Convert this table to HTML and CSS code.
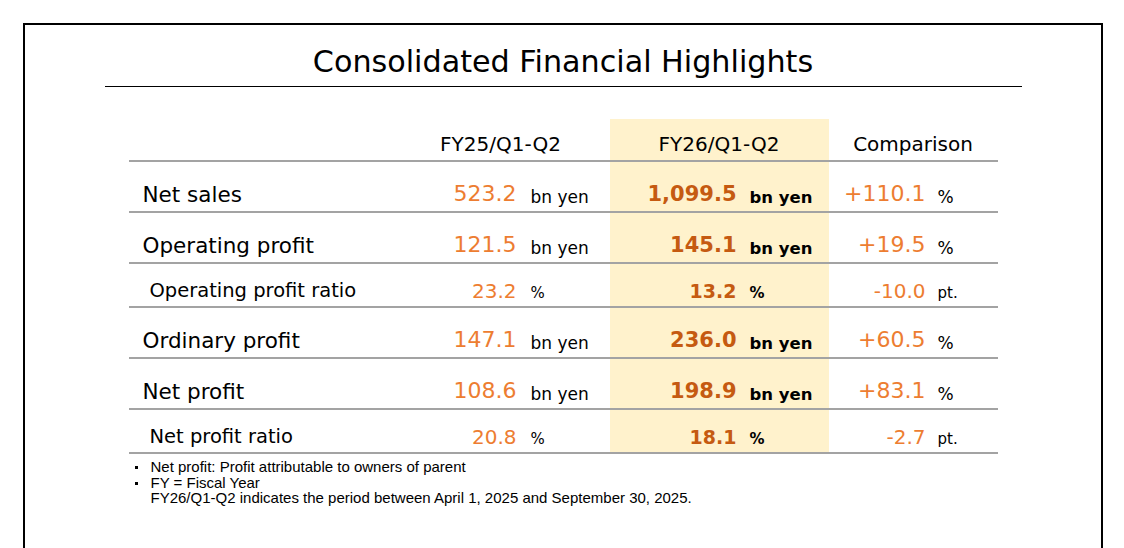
FILE: index.html
```html
<!DOCTYPE html>
<html lang="en">
<head>
<meta charset="utf-8">
<title>Consolidated Financial Highlights</title>
<link rel="stylesheet" href="styles.css">
</head>
<body>
<div class="frame">
  <h1 class="title">Consolidated Financial Highlights</h1>
  <div class="table">
    <div class="row head">
      <div class="cell blank"></div>
      <div class="cell hcell span2"><span>FY25/Q1-Q2</span></div>
      <div class="cell hcell span2 hl"><span>FY26/Q1-Q2</span></div>
      <div class="cell hcell span2"><span>Comparison</span></div>
    </div>

    <div class="row main">
      <div class="cell label">Net sales</div>
      <div class="cell num">523.2</div>
      <div class="cell unit u1">bn yen</div>
      <div class="cell num bold hl">1,099.5</div>
      <div class="cell unit bold u2 hl">bn yen</div>
      <div class="cell num">+110.1</div>
      <div class="cell unit u3">%</div>
    </div>

    <div class="row main">
      <div class="cell label">Operating profit</div>
      <div class="cell num">121.5</div>
      <div class="cell unit u1">bn yen</div>
      <div class="cell num bold hl">145.1</div>
      <div class="cell unit bold u2 hl">bn yen</div>
      <div class="cell num">+19.5</div>
      <div class="cell unit u3">%</div>
    </div>

    <div class="row sub">
      <div class="cell label">Operating profit ratio</div>
      <div class="cell num">23.2</div>
      <div class="cell unit u1">%</div>
      <div class="cell num bold hl">13.2</div>
      <div class="cell unit bold u2 hl">%</div>
      <div class="cell num">-10.0</div>
      <div class="cell unit u3">pt.</div>
    </div>

    <div class="row main">
      <div class="cell label">Ordinary profit</div>
      <div class="cell num">147.1</div>
      <div class="cell unit u1">bn yen</div>
      <div class="cell num bold hl">236.0</div>
      <div class="cell unit bold u2 hl">bn yen</div>
      <div class="cell num">+60.5</div>
      <div class="cell unit u3">%</div>
    </div>

    <div class="row main">
      <div class="cell label">Net profit</div>
      <div class="cell num">108.6</div>
      <div class="cell unit u1">bn yen</div>
      <div class="cell num bold hl">198.9</div>
      <div class="cell unit bold u2 hl">bn yen</div>
      <div class="cell num">+83.1</div>
      <div class="cell unit u3">%</div>
    </div>

    <div class="row sub">
      <div class="cell label">Net profit ratio</div>
      <div class="cell num">20.8</div>
      <div class="cell unit u1">%</div>
      <div class="cell num bold hl">18.1</div>
      <div class="cell unit bold u2 hl">%</div>
      <div class="cell num">-2.7</div>
      <div class="cell unit u3">pt.</div>
    </div>
  </div>

  <ul class="notes">
    <li>Net profit: Profit attributable to owners of parent</li>
    <li>FY = Fiscal Year<br>FY26/Q1-Q2 indicates the period between April 1, 2025 and September 30, 2025.</li>
  </ul>
</div>
</body>
</html>
```

FILE: styles.css
```css
html, body {
  margin: 0;
  padding: 0;
  background: #ffffff;
}

body {
  font-family: "DejaVu Sans", Verdana, sans-serif;
  color: #000000;
  overflow: hidden;
  height: 548px;
}

.frame {
  box-sizing: border-box;
  width: 1080px;
  height: 525px;
  margin: 23px 0 0 23px;
  border: 2px solid #000000;
  border-bottom: none;
  padding-top: 19px;
}

.title {
  width: 917px;
  margin: 0 auto;
  padding-bottom: 6px;
  border-bottom: 1px solid #000000;
  font-size: 30.2px;
  font-weight: normal;
  line-height: 36px;
  text-align: center;
}

.table {
  width: 869px;
  margin: 32px auto 0;
}

.row {
  display: grid;
  grid-template-columns: 263px 125px 93px 127px 92px 97px 72px;
  border-bottom: 2px solid #a3a3a3;
}

.row.head { height: 41px; }
.row.main { height: 49px; }
.row.sub  { height: 42px; }

.cell {
  display: flex;
  align-items: flex-end;
  line-height: 1;
  padding-bottom: 6px;
  box-sizing: border-box;
  white-space: nowrap;
}

.span2 { grid-column: span 2; }

.hcell {
  justify-content: center;
  font-size: 20px;
}

.hl { background: #fff2cc; }

.label { padding-left: 14px; }
.main .label { font-size: 21.5px; }
.sub .label { font-size: 19.5px; padding-left: 21px; }

.num {
  justify-content: flex-end;
  color: #ed7d31;
}
.main .num { font-size: 22px; }
.sub .num { font-size: 20px; padding-bottom: 5px; }

.num.bold {
  color: #c55a11;
  font-weight: bold;
}
.main .num.bold { font-size: 21px; padding-bottom: 6px; }
.sub .num.bold { font-size: 19px; padding-bottom: 5px; }

.unit { padding-bottom: 5px; }
.main .unit { font-size: 17px; }
.sub .unit { font-size: 15px; padding-bottom: 5px; }
.unit.bold { font-weight: bold; }
.main .unit.bold { font-size: 16.5px; }

.u1 { padding-left: 14px; }
.u2 { padding-left: 13px; }
.u3 { padding-left: 12px; }

.notes {
  list-style: none;
  width: 869px;
  margin: 5px auto 0;
  padding: 0;
  font-family: "Liberation Sans", Arial, sans-serif;
  font-size: 15px;
  line-height: 15.5px;
}

.notes li {
  position: relative;
  padding-left: 22px;
}

.notes li::before {
  content: "";
  position: absolute;
  left: 6px;
  top: 7px;
  width: 3px;
  height: 3px;
  background: #000000;
}
```
